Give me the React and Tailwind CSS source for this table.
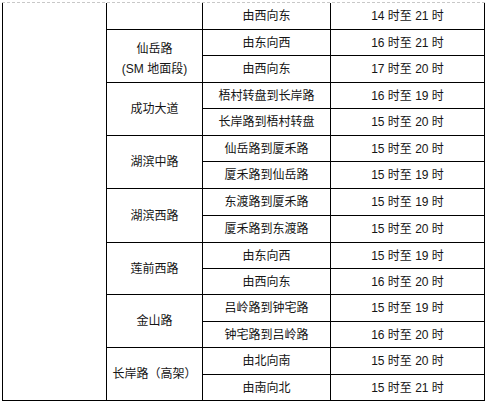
const groups = [
  { name: [], rows: [["由西向东", "14 时至 21 时"]] },
  { name: ["仙岳路", "(SM 地面段)"], rows: [["由东向西", "16 时至 21 时"], ["由西向东", "17 时至 20 时"]] },
  { name: ["成功大道"], rows: [["梧村转盘到长岸路", "16 时至 19 时"], ["长岸路到梧村转盘", "15 时至 20 时"]] },
  { name: ["湖滨中路"], rows: [["仙岳路到厦禾路", "15 时至 20 时"], ["厦禾路到仙岳路", "15 时至 19 时"]] },
  { name: ["湖滨西路"], rows: [["东渡路到厦禾路", "15 时至 19 时"], ["厦禾路到东渡路", "15 时至 20 时"]] },
  { name: ["莲前西路"], rows: [["由东向西", "15 时至 19 时"], ["由西向东", "16 时至 20 时"]] },
  { name: ["金山路"], rows: [["吕岭路到钟宅路", "15 时至 19 时"], ["钟宅路到吕岭路", "16 时至 20 时"]] },
  { name: ["长岸路（高架）"], rows: [["由北向南", "15 时至 20 时"], ["由南向北", "15 时至 21 时"]] },
];

// row heights incl. bottom border, to land on the ruled lines
const heights = [27, 26, 27, 26, 27, 26, 27, 27, 27, 26, 26, 27, 26, 27, 26];

export default function App() {
  let idx = 0;
  return (
    <div
      className="bg-white w-[488px] h-[403px] pl-[2px] pt-[2px] text-[12px] text-[#151515]"
      style={{ fontFamily: '"Liberation Sans", "Noto Sans CJK SC", sans-serif' }}
    >
      <div className="w-[483px] border-t border-dashed border-[#c8c8c8] flex">
        <div className="w-[105px] border-l border-r border-b border-black" />
        <div className="flex flex-col">
          {groups.map((g, gi) => {
            const rows = g.rows.map((r) => ({ r, h: heights[idx++] }));
            const total = rows.reduce((s, x) => s + x.h, 0);
            return (
              <div key={gi} className="flex">
                <div
                  className={
                    "w-[96px] border-r border-b border-black flex flex-col items-center justify-center leading-[20px] " +
                    (g.name.length > 1 ? "pt-[5px]" : "")
                  }
                  style={{ height: total }}
                >
                  {g.name.map((n) => (
                    <div key={n}>{n}</div>
                  ))}
                </div>
                <div className="flex flex-col">
                  {rows.map(({ r, h }, ri) => (
                    <div key={ri} className="flex" style={{ height: h }}>
                      <div className="w-[128px] border-r border-b border-black flex items-center justify-center">
                        {r[0]}
                      </div>
                      <div className="w-[154px] border-r border-b border-black flex items-center justify-center">
                        {r[1]}
                      </div>
                    </div>
                  ))}
                </div>
              </div>
            );
          })}
        </div>
      </div>
    </div>
  );
}
